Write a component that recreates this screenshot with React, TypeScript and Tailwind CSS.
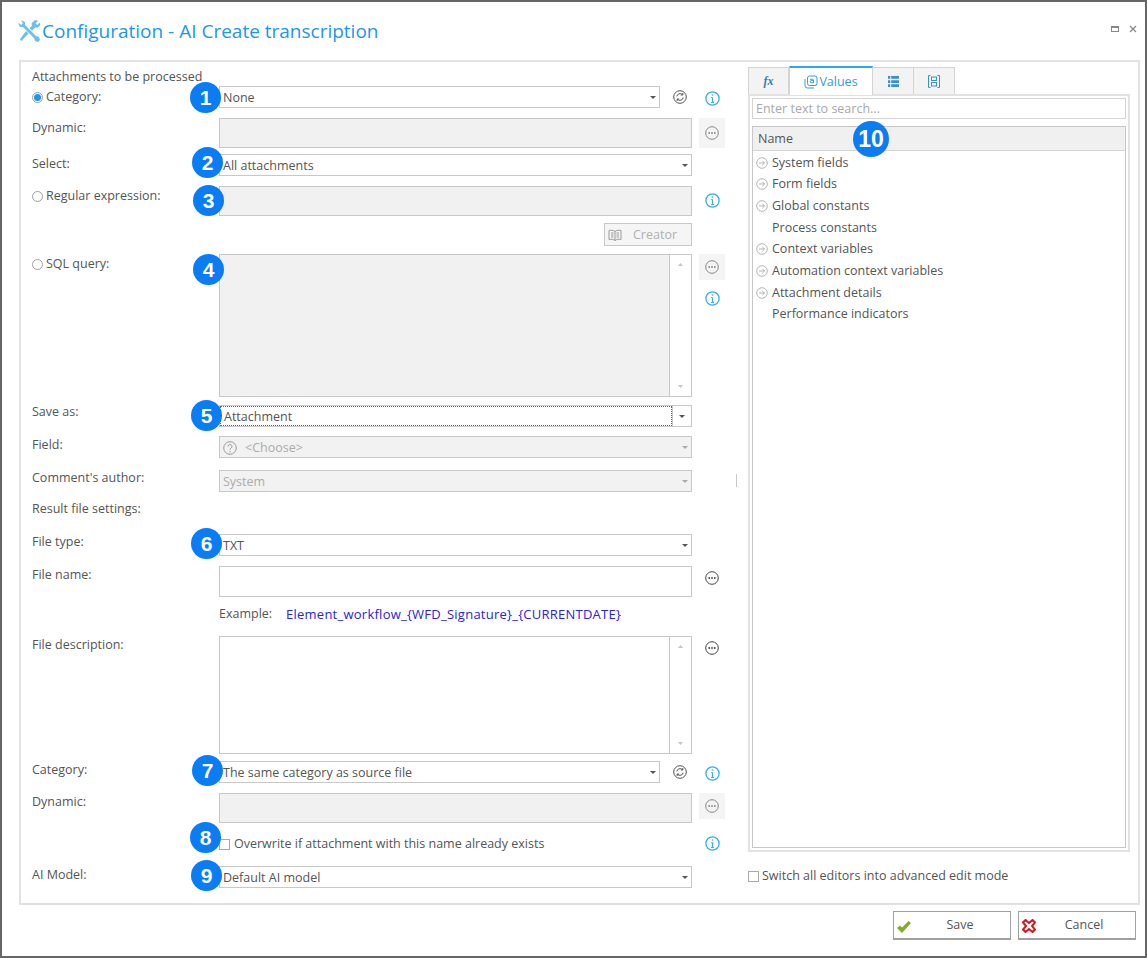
import type { ReactNode } from "react";

const font = "font-['Open_Sans','Noto_Sans',sans-serif]";

function Badge({ n, className, big = false }: { n: number; className: string; big?: boolean }) {
	return (
		<span
			className={`absolute z-10 flex items-center justify-center rounded-full bg-[#0a7cf4] text-white font-['Liberation_Sans',sans-serif] font-bold leading-none ${big ? "h-[36px] w-[36px] text-[23px]" : "h-[31px] w-[31px] text-[21px]"} ${className}`}
		>
			{n}
		</span>
	);
}

function Caret({ color = "#555" }: { color?: string }) {
	return (
		<svg width="6" height="3" viewBox="0 0 6 3">
			<path d="M0 0h6L3 3z" fill={color} />
		</svg>
	);
}

function Info() {
	return (
		<svg width="15" height="15" viewBox="0 0 15 15" fill="none" stroke="#35aef2">
			<circle cx="7.5" cy="7.5" r="6.6" strokeWidth="1.3" />
			<path d="M7.5 6.5v5M6 11.500h3M6.200 6.500h1.300" strokeWidth="1.2" />
			<path d="M7.5 3.400v1.300" strokeWidth="1.5" />
		</svg>
	);
}

function Refresh() {
	return (
		<svg width="14" height="14" viewBox="0 0 14 14" fill="none" stroke="#555" strokeWidth="1">
			<circle cx="7" cy="7" r="6.3" />
			<path d="M3.800 6.400a3.300 3.300 0 0 1 5.600-1.800M10.200 7.600a3.300 3.300 0 0 1-5.600 1.800" />
			<path d="M9.800 3v2H7.800M4.200 11V9h2" />
		</svg>
	);
}

function Dots({ muted = false }: { muted?: boolean }) {
	const c = muted ? "#888" : "#444";
	return (
		<svg width="14" height="14" viewBox="0 0 14 14" fill="none">
			<circle cx="7" cy="7" r="6.3" stroke={c} />
			<circle cx="4.200" cy="7" r="0.9" fill={c} />
			<circle cx="7" cy="7" r="0.9" fill={c} />
			<circle cx="9.800" cy="7" r="0.9" fill={c} />
		</svg>
	);
}

function DotsButton({ muted = false, className }: { muted?: boolean; className: string }) {
	return (
		<span className={`flex items-center justify-center w-[26px] ${muted ? "bg-[#f4f4f4]" : ""} ${className}`}>
			<Dots muted={muted} />
		</span>
	);
}

function Arrow() {
	return (
		<svg width="12" height="12" viewBox="0 0 12 12" fill="none" stroke="#b5b5b5">
			<circle cx="6" cy="6" r="5.3" />
			<path d="M3 6h5.500M6.300 3.800 8.500 6 6.300 8.200" />
		</svg>
	);
}

function Select({
	value,
	disabled = false,
	dotted = false,
	children,
	className = "",
}: {
	value: string;
	disabled?: boolean;
	dotted?: boolean;
	children?: ReactNode;
	className?: string;
}) {
	return (
		<div
			className={`flex items-center h-[22px] border border-[#c8c8c8] ${disabled ? "bg-[#f2f2f2] text-[#ababab]" : "bg-white"} ${className}`}
		>
			<div
				className={`flex-1 flex items-center h-full pl-[3px] pt-px ${dotted ? "border border-dotted border-[#666]" : ""}`}
			>
				{children}
				{value}
			</div>
			<span
				className={`flex items-center justify-center h-full ${dotted ? "w-[19px] border-l border-[#c8c8c8]" : "w-[13px]"}`}
			>
				<Caret color={disabled ? "#aaa" : "#555"} />
			</span>
		</div>
	);
}

function Row({
	label,
	className,
	labelClass = "",
	children,
	radio,
}: {
	label?: string;
	className: string;
	labelClass?: string;
	children?: ReactNode;
	radio?: "on" | "off";
}) {
	return (
		<div className={`flex ${className}`}>
			<div className={`w-[187px] flex items-start ${labelClass}`}>
				{radio && <Radio on={radio === "on"} />}
				{label && <span>{label}</span>}
			</div>
			{children}
		</div>
	);
}

function Radio({ on }: { on: boolean }) {
	return (
		<span className="mt-[3px] mr-[3px] flex items-center justify-center h-[11px] w-[11px] rounded-full border border-[#a0a0a0] bg-white shrink-0">
			{on && <span className="h-[7px] w-[7px] rounded-full bg-[#1c97ea]" />}
		</span>
	);
}

function Scrollbar() {
	return (
		<div className="w-[22px] flex flex-col justify-between items-center py-[8px] bg-white border-l border-[#c8c8c8]">
			<svg width="5" height="3" viewBox="0 0 5 3">
				<path d="M0 3h5L2.500 0z" fill="#c4c4c4" />
			</svg>
			<svg width="5" height="3" viewBox="0 0 5 3">
				<path d="M0 0h5L2.500 3z" fill="#c4c4c4" />
			</svg>
		</div>
	);
}

function Check() {
	return <span className="h-[11px] w-[11px] border border-[#a9a9a9] bg-white shrink-0" />;
}

const treeItems = [
	{ name: "System fields", arrow: true },
	{ name: "Form fields", arrow: true },
	{ name: "Global constants", arrow: true },
	{ name: "Process constants", arrow: false },
	{ name: "Context variables", arrow: true },
	{ name: "Automation context variables", arrow: true },
	{ name: "Attachment details", arrow: true },
	{ name: "Performance indicators", arrow: false },
];

export default function App() {
	return (
		<div
			className={`${font} h-[958px] w-[1147px] border-2 border-[#666] bg-white text-[12.5px] leading-[16px] text-[#555] flex flex-col overflow-hidden`}
		>
			{/* Title bar */}
			<div className="h-[58px] flex items-start justify-between pl-[15px] pr-[8px] pt-[16px]">
				<div className="flex items-center text-[#1c97ea] text-[19px] leading-[26px]">
					<svg width="24" height="24" viewBox="0 0 24 24" className="mr-px">
						<path
							d="M4 1 8 3v3l11 11 3 1 1 3-2 2-3-1-1-3L6 8H3L1 4l2 1 1 1 2-2-1-1zM18 1l3 .8-2.400 2.500 1.600 1.600L22.700 3.500l.6 2.700-2.800 2.600-2.200-.4-3.300 3.300-2.400-2.400L15 6.500l-.4-2.300zM9 12l2.500 2.500L5 21.500c-1 .8-2.500-.8-1.700-1.800z"
							fill="#6cc0ee"
						/>
					</svg>
					Configuration - AI Create transcription
				</div>
				<div className="flex items-center gap-[10px] mt-[7px]">
					<span className="h-[6px] w-[8px] border border-[#888] border-t-2" />
					<svg width="8" height="8" viewBox="0 0 8 8" stroke="#888" strokeWidth="1.200">
						<path d="M1 1l6 6M7 1 1 7" />
					</svg>
				</div>
			</div>

			{/* Main panel */}
			<div className="relative ml-[17px] w-[1121px] h-[845px] border-2 border-[#e2e2e2] flex">
				<span className="absolute left-[715px] top-[412px] h-[13px] w-px bg-[#c8c8c8]" />

				{/* Form column */}
				<div className="relative w-[727px] pl-[11px] pt-[7px]">
					<div className="h-[16px]">Attachments to be processed</div>
					<Row label="Category:" radio="on" labelClass="pt-[3px]" className="h-[22px] mt-px">
						<Select value="None" className="w-[441px]" />
						<span className="ml-[13px] mt-[4px]">
							<Refresh />
						</span>
						<span className="ml-[18px] mt-[5px]">
							<Info />
						</span>
						<Badge n={1} className="left-[169px] top-[20px]" />
					</Row>
					<Row label="Dynamic:" labelClass="pt-[2px]" className="h-[30px] mt-[10px]">
						<div className="w-[473px] h-[30px] bg-[#f1f1f1] border border-[#c8c8c8]" />
						<span className="ml-[7px]">
							<DotsButton muted className="h-[30px]" />
						</span>
					</Row>
					<Row label="Select:" labelClass="pt-[2px]" className="h-[22px] mt-[6px]">
						<Select value="All attachments" className="w-[473px]" />
						<Badge n={2} className="left-[171px] top-[85px]" />
					</Row>
					<Row label="Regular expression:" radio="off" labelClass="pt-[2px]" className="h-[30px] mt-[10px]">
						<div className="w-[473px] h-[30px] bg-[#f1f1f1] border border-[#c8c8c8]" />
						<span className="ml-[13px] mt-[7px]">
							<Info />
						</span>
						<Badge n={3} className="left-[172px] top-[123px]" />
					</Row>
					<div className="flex justify-end w-[660px] mt-[7px]">
						<div className="flex items-center h-[23px] w-[88px] border border-[#c8c8c8] bg-[#f5f5f5] text-[#b0b0b0] pl-[3px]">
							<svg width="14" height="12" viewBox="0 0 14 12" fill="none" stroke="#999">
								<path d="M7 2.500C5.500 1.200 3 1 1 1.500v9c2-.5 4.500-.3 6 1 1.500-1.300 4-1.500 6-1v-9c-2-.5-4.500-.3-6 1zM7 2.500v9M3 4h2.500M3 6h2.500M3 8h2.500M8.500 4H11M8.500 6H11M8.500 8H11" />
							</svg>
							<span className="ml-[11px]">Creator</span>
						</div>
					</div>
					<Row label="SQL query:" radio="off" labelClass="pt-[2px]" className="h-[143px] mt-[8px]">
						<div className="w-[473px] h-[143px] flex border border-[#c8c8c8] bg-[#f1f1f1]">
							<div className="flex-1" />
							<Scrollbar />
						</div>
						<div className="ml-[7px] flex flex-col items-center">
							<DotsButton muted className="h-[26px]" />
							<span className="mt-[11px]">
								<Info />
							</span>
						</div>
						<Badge n={4} className="left-[172px] top-[192px]" />
					</Row>
					<Row label="Save as:" labelClass="-mt-px" className="h-[22px] mt-[8px]">
						<Select value="Attachment" dotted className="w-[473px]" />
						<Badge n={5} className="left-[170px] top-[338px]" />
					</Row>
					<Row label="Field:" labelClass="pt-px" className="h-[22px] mt-[9px]">
						<Select value="<Choose>" disabled className="w-[473px]">
							<svg width="14" height="14" viewBox="0 0 14 14" fill="none" stroke="#999" className="mr-[8px]">
								<circle cx="7" cy="7" r="6.300" />
								<path d="M5 5.500a2 2 0 1 1 3 1.700c-.7.400-1 .8-1 1.600M7 10v1.300" />
							</svg>
						</Select>
					</Row>
					<Row label="Comment's author:" className="h-[22px] mt-[12px]">
						<Select value="System" disabled className="w-[473px]" />
					</Row>
					<div className="h-[16px] mt-[9px]">Result file settings:</div>
					<Row label="File type:" className="h-[22px] mt-[17px]">
						<Select value="TXT" className="w-[473px]" />
						<Badge n={6} className="left-[170px] top-[466px]" />
					</Row>
					<Row label="File name:" labelClass="pt-px" className="h-[31px] mt-[10px]">
						<div className="w-[473px] h-[31px] bg-white border border-[#c8c8c8]" />
						<span className="ml-[7px]">
							<DotsButton className="h-[24px]" />
						</span>
					</Row>
					<Row className="h-[16px] mt-[9px]">
						<span className="w-[67px]">Example:</span>
						<span className="text-[#2a22e0] text-[13px] tracking-[0.25px]">
							Element_workflow_{"{WFD_Signature}"}_{"{CURRENTDATE}"}
						</span>
					</Row>
					<Row label="File description:" labelClass="pt-px" className="h-[118px] mt-[14px]">
						<div className="w-[473px] h-[118px] flex border border-[#c8c8c8] bg-white">
							<div className="flex-1" />
							<Scrollbar />
						</div>
						<span className="ml-[7px]">
							<DotsButton className="h-[24px]" />
						</span>
					</Row>
					<Row label="Category:" labelClass="pt-px" className="h-[22px] mt-[7px]">
						<Select value="The same category as source file" className="w-[441px]" />
						<span className="ml-[13px] mt-[4px]">
							<Refresh />
						</span>
						<span className="ml-[18px] mt-[5px]">
							<Info />
						</span>
						<Badge n={7} className="left-[171px] top-[693px]" />
					</Row>
					<Row label="Dynamic:" labelClass="pt-px" className="h-[30px] mt-[10px]">
						<div className="w-[473px] h-[30px] bg-[#f1f1f1] border border-[#c8c8c8]" />
						<span className="ml-[7px]">
							<DotsButton muted className="h-[26px]" />
						</span>
					</Row>
					<Row className="h-[16px] mt-[13px]">
						<div className="w-[473px] flex items-center">
							<Check />
							<span className="ml-[4px]">Overwrite if attachment with this name already exists</span>
						</div>
						<span className="ml-[13px]">
							<Info />
						</span>
						<Badge n={8} className="left-[169px] top-[760px]" />
					</Row>
					<Row label="AI Model:" labelClass="pt-px" className="h-[22px] mt-[14px]">
						<Select value="Default AI model" className="w-[473px]" />
						<Badge n={9} className="left-[170px] top-[798px]" />
					</Row>
				</div>

				{/* Values column */}
				<div className="relative w-[382px] pt-[3px]">
					<div className="flex h-[29px] text-[#777] items-end">
						<div className="flex items-center justify-center h-[27px] w-[41px] bg-[#f3f3f3] border border-[#d4d4d4] border-b-0">
							<span className="font-['Liberation_Serif',serif] italic font-bold text-[#3c78b5] text-[12px]">fx</span>
						</div>
						<div className="flex items-center justify-center h-[29px] w-[84px] bg-white border-x border-[#d4d4d4] border-t-2 border-t-[#2aa9f0] text-[#3a9ad9] relative top-px z-10">
							<svg width="14" height="14" viewBox="0 0 14 14" fill="none" stroke="#3a9ad9" className="mr-px">
								<rect x="3.500" y="1" width="9.500" height="9.500" rx="2" />
								<path d="M1 4v6.500A2.500 2.500 0 0 0 3.500 13H10" />
								<path d="M6 4.300h2.500a1 1 0 0 1 1 1v2.500H7a1.200 1.200 0 0 1 0-2.200h2.500" />
							</svg>
							Values
						</div>
						<div className="flex items-center justify-center h-[27px] w-[41px] bg-[#f3f3f3] border-r border-t border-[#d4d4d4]">
							<svg width="11" height="11" viewBox="0 0 12 12" fill="#3a8fd0">
								<path d="M0 0h2.500v3H0zM3.500 0H12v3H3.500zM0 4.500h2.500v3H0zM3.500 4.500H12v3H3.500zM0 9h2.500v3H0zM3.500 9H12v3H3.500z" />
							</svg>
						</div>
						<div className="flex items-center justify-center h-[27px] w-[41px] bg-[#f3f3f3] border-r border-t border-[#d4d4d4]">
							<svg width="12" height="13" viewBox="0 0 12 13" fill="none" stroke="#3a8fd0">
								<path d="M2.500.5h-2v12h2M9.500.5h2v12h-2" />
								<rect x="3.500" y="2" width="5" height="3.500" />
								<rect x="3.500" y="7.500" width="5" height="3.500" />
							</svg>
						</div>
					</div>
					<div className="w-[382px] h-[758px] border-2 border-[#e2e2e2] p-[2px]">
						<div className="h-[21px] border border-[#d4d4d4] px-[3px] flex items-center text-[#a9a9a9]">
							Enter text to search...
						</div>
						<div className="mt-[7px] h-[722px] border border-[#c8c8c8]">
							<div className="h-[24px] bg-[#f0f0f0] border-b border-[#d4d4d4] flex items-center pl-[5px]">
								Name
							</div>
							<div className="pt-px">
								{treeItems.map((item) => (
									<div key={item.name} className="flex items-center h-[21.67px] pl-[3px]">
										<span className="w-[16px] flex">{item.arrow && <Arrow />}</span>
										{item.name}
									</div>
								))}
							</div>
						</div>
					</div>
					<div className="flex items-center mt-[16px]">
						<Check />
						<span className="ml-[3px]">Switch all editors into advanced edit mode</span>
					</div>
					<Badge big n={10} className="left-[105px] top-[59px]" />
				</div>
			</div>

			{/* Footer */}
			<div className="flex justify-end gap-[7px] pr-[9px] pt-[6px]">
				<button className="relative flex items-center justify-center h-[29px] w-[118px] border border-[#a0a0a0] border-b-2 bg-white pl-[16px]">
					<svg width="14" height="12" viewBox="0 0 14 12" className="absolute left-[3px] top-[9px]">
						<path d="M0 7l3-2.500 2 2L11.500 0 14 2 5 12z" fill="#7fae2b" />
					</svg>
					Save
				</button>
				<button className="relative flex items-center justify-center h-[29px] w-[118px] border border-[#a0a0a0] border-b-2 bg-white pl-[14px]">
					<svg width="14" height="14" viewBox="0 0 14 14" fill="none" stroke="#d9141e" strokeWidth="2" className="absolute left-[3px] top-[7px]">
						<path d="M3.500 1 7 4l3.500-3L13 3.500 10 7l3 3.500-2.500 2.500L7 10l-3.500 3L1 10.500 4 7 1 3.500z" />
					</svg>
					Cancel
				</button>
			</div>
		</div>
	);
}
